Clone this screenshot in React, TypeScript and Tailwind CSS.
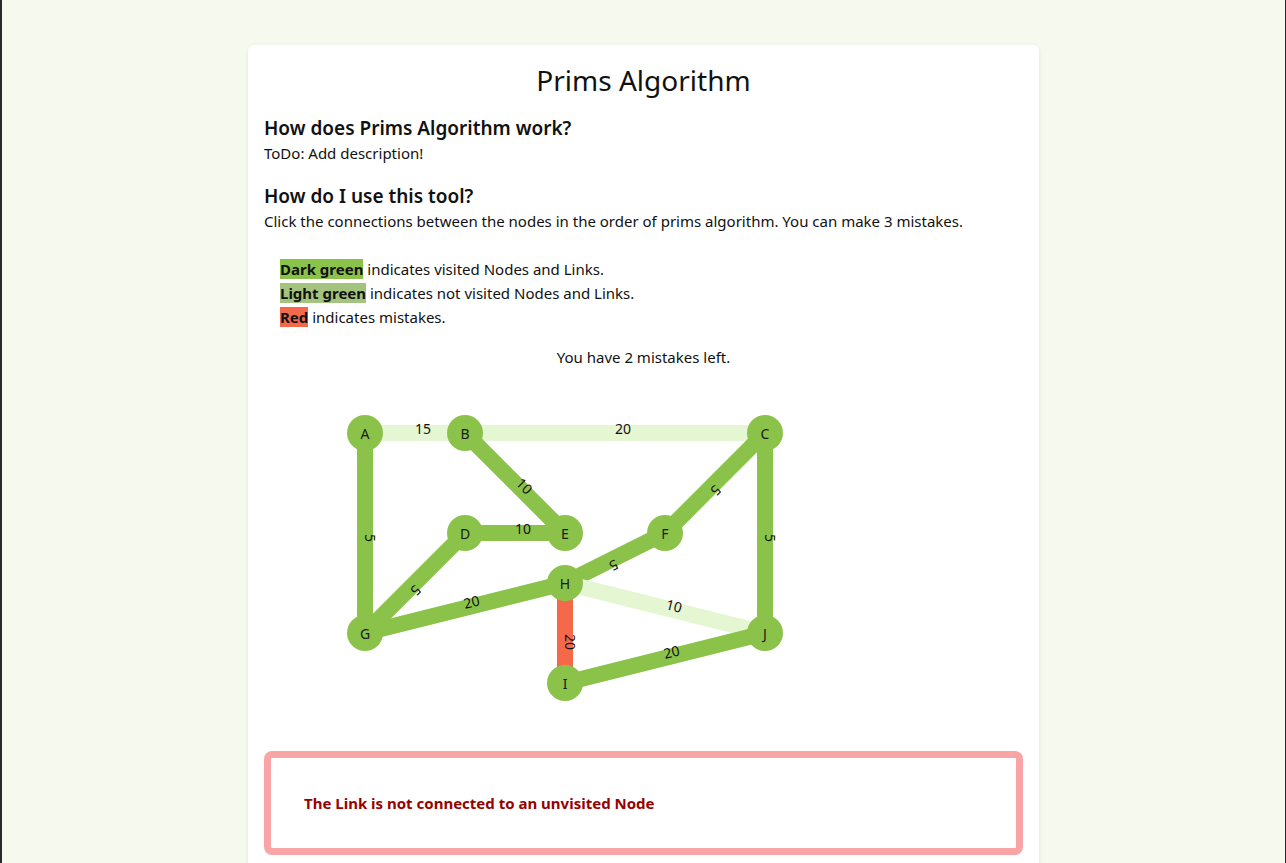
import React from 'react'

type Node = { id: string; x: number; y: number }
type Link = { from: string; to: string; weight: number; state: 'visited' | 'open' | 'mistake' }

const nodes: Node[] = [
  { id: 'A', x: 100, y: 50 },
  { id: 'B', x: 200, y: 50 },
  { id: 'C', x: 500, y: 50 },
  { id: 'D', x: 200, y: 150 },
  { id: 'E', x: 300, y: 150 },
  { id: 'F', x: 400, y: 150 },
  { id: 'G', x: 100, y: 250 },
  { id: 'H', x: 300, y: 200 },
  { id: 'I', x: 300, y: 300 },
  { id: 'J', x: 500, y: 250 },
]

const links: Link[] = [
  { from: 'A', to: 'B', weight: 15, state: 'open' },
  { from: 'B', to: 'C', weight: 20, state: 'open' },
  { from: 'A', to: 'G', weight: 5, state: 'visited' },
  { from: 'B', to: 'E', weight: 10, state: 'visited' },
  { from: 'D', to: 'E', weight: 10, state: 'visited' },
  { from: 'D', to: 'G', weight: 5, state: 'visited' },
  { from: 'G', to: 'H', weight: 20, state: 'visited' },
  { from: 'F', to: 'H', weight: 5, state: 'visited' },
  { from: 'C', to: 'F', weight: 5, state: 'visited' },
  { from: 'C', to: 'J', weight: 5, state: 'visited' },
  { from: 'H', to: 'J', weight: 10, state: 'open' },
  { from: 'H', to: 'I', weight: 20, state: 'mistake' },
  { from: 'I', to: 'J', weight: 20, state: 'visited' },
]

const stroke = {
  visited: '#8bc34a',
  open: '#e5f6d3',
  mistake: '#f4694a',
}

const byId = (id: string) => nodes.find(n => n.id === id)!

function Graph() {
  return (
    <svg width={600} height={340} className="block ml-[1px]">
      {links.map(link => {
        const a = byId(link.from)
        const b = byId(link.to)
        const mx = (a.x + b.x) / 2
        const my = (a.y + b.y) / 2 + 1
        const angle = (Math.atan2(b.y - a.y, b.x - a.x) * 180) / Math.PI
        return (
          <g key={link.from + link.to}>
            <line x1={a.x} y1={a.y} x2={b.x} y2={b.y} stroke={stroke[link.state]} strokeWidth={16} />
            <text
              x={mx}
              y={my}
              fontSize={14}
              fill="#111"
              transform={`rotate(${angle} ${mx} ${my})`}
            >
              {link.weight}
            </text>
          </g>
        )
      })}
      {nodes.map(node => (
        <g key={node.id}>
          <circle cx={node.x} cy={node.y} r={18} fill="#8bc34a" />
          <text
            x={node.x}
            y={node.y}
            fontSize={14}
            fill="#1a1a1a"
            textAnchor="middle"
            dominantBaseline="central"
          >
            {node.id}
          </text>
        </g>
      ))}
    </svg>
  )
}

export default function App() {
  return (
    <div
      className="min-h-[863px] bg-[#f6f9ed] border-l-2 border-r border-[#2b2b2b] text-[15px] leading-6 text-[#111]"
      style={{ fontFamily: '"Noto Sans", "Open Sans", sans-serif' }}
    >
      <div className="pt-[45px]">
        <div className="mx-auto w-[791px] min-h-[818px] bg-white rounded-md shadow-[0_1px_4px_rgba(0,0,0,0.08)] px-4 pt-4 pb-8">
          <h1 className="text-center text-[28px] leading-[38px] font-normal">Prims Algorithm</h1>

          <h2 className="mt-[16px] text-[19px] leading-[26px] font-semibold">How does Prims Algorithm work?</h2>
          <p>ToDo: Add description!</p>

          <h2 className="mt-[18px] text-[19px] leading-[26px] font-semibold">How do I use this tool?</h2>
          <p>Click the connections between the nodes in the order of prims algorithm. You can make 3 mistakes.</p>

          <div className="mt-6 pl-4">
            <p>
              <span className="bg-[#8bc34a] font-bold">Dark green</span> indicates visited Nodes and Links.
            </p>
            <p>
              <span className="bg-[#a4c37e] font-bold">Light green</span> indicates not visited Nodes and Links.
            </p>
            <p>
              <span className="bg-[#f4694a] font-bold">Red</span> indicates mistakes.
            </p>
          </div>

          <p className="mt-4 text-center">You have 2 mistakes left.</p>

          <div className="mt-[14px]">
            <Graph />
          </div>

          <div className="mt-7 h-[104px] border-[7px] border-[#f9a5a5] rounded-lg flex items-center pl-[33px]">
            <p className="text-[15px] font-bold text-[#990000]">The Link is not connected to an unvisited Node</p>
          </div>
        </div>
      </div>
    </div>
  )
}
